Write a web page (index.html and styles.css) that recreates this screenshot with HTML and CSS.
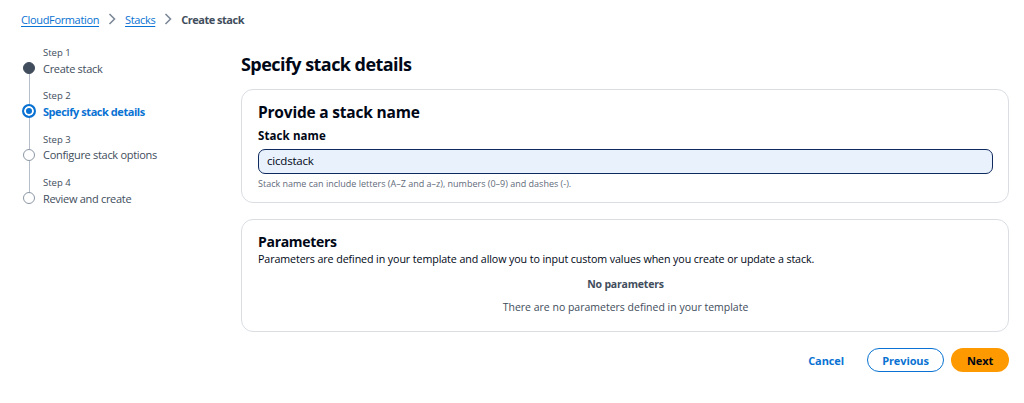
FILE: index.html
```html
<!DOCTYPE html>
<html>
<head>
<meta charset="utf-8">
<link rel="stylesheet" href="styles.css">
</head>
<body>
<nav class="breadcrumb">
  <a class="crumb-link">CloudFormation</a>
  <svg class="chev" width="8" height="12" viewBox="0 0 8 12"><path d="M1.5 1 L6.5 6 L1.5 11" fill="none" stroke="#7d8998" stroke-width="1.6"/></svg>
  <a class="crumb-link">Stacks</a>
  <svg class="chev" width="8" height="12" viewBox="0 0 8 12"><path d="M1.5 1 L6.5 6 L1.5 11" fill="none" stroke="#7d8998" stroke-width="1.6"/></svg>
  <span class="crumb-current">Create stack</span>
</nav>
<div class="layout">
  <aside class="steps">
    <div class="step done">
      <div class="step-label">Step 1</div>
      <div class="step-row"><span class="dot"></span><span class="step-title">Create stack</span></div>
    </div>
    <div class="step active">
      <div class="step-label">Step 2</div>
      <div class="step-row"><span class="dot"></span><span class="step-title">Specify stack details</span></div>
    </div>
    <div class="step">
      <div class="step-label">Step 3</div>
      <div class="step-row"><span class="dot"></span><span class="step-title">Configure stack options</span></div>
    </div>
    <div class="step last">
      <div class="step-label">Step 4</div>
      <div class="step-row"><span class="dot"></span><span class="step-title">Review and create</span></div>
    </div>
  </aside>
  <main class="content">
    <h1 class="page-title">Specify stack details</h1>
    <section class="card">
      <h2 class="card-title">Provide a stack name</h2>
      <label class="field-label">Stack name</label>
      <div class="input">cicdstack</div>
      <div class="hint">Stack name can include letters (A–Z and a–z), numbers (0–9) and dashes (-).</div>
    </section>
    <section class="card params">
      <h2 class="card-title small">Parameters</h2>
      <p class="desc">Parameters are defined in your template and allow you to input custom values when you create or update a stack.</p>
      <div class="empty-title">No parameters</div>
      <div class="empty-text">There are no parameters defined in your template</div>
    </section>
    <div class="actions">
      <button class="btn link">Cancel</button>
      <button class="btn outline">Previous</button>
      <button class="btn primary">Next</button>
    </div>
  </main>
</div>
</body>
</html>
```
FILE: styles.css
```css
* { box-sizing: border-box; }
body {
  margin: 0;
  font-family: "Open Sans", "Noto Sans", sans-serif;
  color: #000716;
  background: #fff;
  width: 1024px;
  height: 403px;
  overflow: hidden;
}
.breadcrumb {
  display: flex;
  align-items: center;
  gap: 9px;
  padding: 8px 0 0 21px;
  height: 30px;
  font-size: 11px;
}
.crumb-link {
  color: #0972d3;
  text-decoration: underline;
  text-underline-offset: 2px;
  font-weight: 500;
  letter-spacing: -0.35px;
}
.crumb-current { color: #414d5c; font-weight: 700; letter-spacing: -0.5px; }
.chev { margin: 0; }
.layout {
  display: flex;
  padding: 15px 15px 0 0;
}
.steps {
  width: 241px;
  flex: none;
  padding-left: 23px;
  padding-top: 0;
}
.step { position: relative; height: 43.4px; }
.step-label {
  font-size: 9.5px;
  color: #414d5c;
  padding-left: 20px;
  height: 15px;
  line-height: 15px;
}
.step-row {
  display: flex;
  align-items: center;
  height: 16px;
}
.dot {
  width: 12px;
  height: 12px;
  border-radius: 50%;
  border: 1.5px solid #8c97a5;
  background: #fff;
  flex: none;
  position: relative;
  z-index: 1;
}
.step-title {
  margin-left: 8px;
  font-size: 11px;
  color: #414d5c;
  letter-spacing: -0.3px;
}
.step::after {
  content: "";
  position: absolute;
  left: 5.5px;
  top: 26px;
  width: 1.5px;
  height: 37px;
  background: #b6bec9;
}
.step.last::after { display: none; }
.step.done .dot { background: #414d5c; border-color: #414d5c; }
.step.active .dot {
  border: 2px solid #0972d3;
  width: 14px; height: 14px;
  margin-left: -1px;
  margin-right: -1px;
  box-shadow: inset 0 0 0 2px #fff;
  background: #0972d3;
}
.step.active .step-title { color: #0972d3; font-weight: 700; letter-spacing: -0.45px; }
.content { flex: 1; padding-top: 8px; }
.page-title {
  margin: 0;
  font-size: 18px;
  font-weight: 700;
  letter-spacing: -0.55px;
  height: 36px;
  line-height: 22px;
}
.card {
  border: 1px solid #dadee3;
  border-radius: 12px;
  padding: 12px 15px 0 16px;
  height: 114px;
}
.card-title {
  margin: 0;
  font-size: 15.5px;
  font-weight: 700;
  letter-spacing: -0.2px;
  line-height: 20px;
}
.field-label {
  display: block;
  margin-top: 6px;
  font-size: 11.5px;
  font-weight: 700;
  line-height: 16px;
  letter-spacing: 0.1px;
}
.input {
  margin-top: 5px;
  height: 25px;
  border: 1.5px solid #0f2a5e;
  border-radius: 7px;
  background: #e8f1fc;
  padding: 0 8px;
  font-size: 11.5px;
  line-height: 22px;
  letter-spacing: -0.2px;
}
.hint {
  margin-top: 3px;
  font-size: 9px;
  color: #5f6b7a;
  line-height: 14px;
}
.params { margin-top: 16px; height: 113px; padding-top: 13px; }
.card-title.small { font-size: 14px; line-height: 18px; letter-spacing: -0.3px; }
.desc {
  margin: 0;
  font-size: 10.7px;
  line-height: 16px;
  letter-spacing: -0.1px;
}
.empty-title {
  text-align: center;
  font-size: 10.5px;
  font-weight: 700;
  color: #414d5c;
  margin-top: 9px;
  line-height: 16px;
  letter-spacing: -0.2px;
}
.empty-text {
  text-align: center;
  font-size: 10.5px;
  color: #414d5c;
  margin-top: 7px;
  line-height: 16px;
}
.actions {
  display: flex;
  justify-content: flex-end;
  align-items: center;
  gap: 7px;
  margin-top: 16px;
}
.btn {
  font-family: inherit;
  font-size: 11px;
  font-weight: 700;
  height: 24px;
  border-radius: 12px;
  padding: 0 14px;
  cursor: pointer;
  letter-spacing: -0.1px;
}
.btn.link { background: none; border: none; color: #0972d3; padding: 0 16px 0 0; }
.btn.outline { background: #fff; border: 1.5px solid #0972d3; color: #0972d3; width: 77px; }
.btn.primary { background: #ff9900; border: none; color: #000716; width: 58px; }
```
